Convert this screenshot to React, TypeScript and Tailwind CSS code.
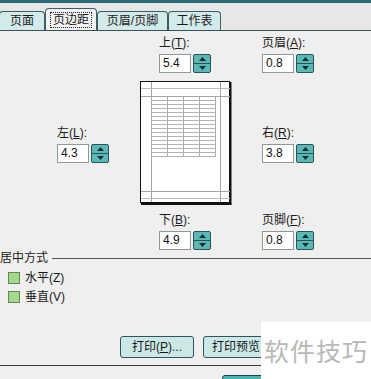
import React from "react";

const cjk = { fontFamily: '"Liberation Sans", "Noto Sans CJK SC", sans-serif' };

type FieldProps = {
  label: string;
  hot: string;
  value: string;
};

// label like 上(T): with underlined hotkey
const Label = ({ label, hot }: { label: string; hot: string }) => (
  <div className="h-[15px] text-[12px] leading-[15px] text-[#1a1a1a]">
    {label}(<span className="underline">{hot}</span>):
  </div>
);

const Spinner = () => (
  <div className="ml-[2px] flex h-[19px] w-[18px] flex-col rounded-[2px] border border-[#27545a] bg-[#5cb8b4]">
    <div className="flex flex-1 items-center justify-center border-b border-[#27545a]">
      <svg width="7" height="4" viewBox="0 0 7 4">
        <path d="M0 4 L3.5 0 L7 4 Z" fill="#12303a" />
      </svg>
    </div>
    <div className="flex flex-1 items-center justify-center">
      <svg width="7" height="4" viewBox="0 0 7 4">
        <path d="M0 0 L3.5 4 L7 0 Z" fill="#12303a" />
      </svg>
    </div>
  </div>
);

const Field = ({ label, hot, value }: FieldProps) => (
  <div className="flex flex-col gap-[3px]">
    <Label label={label} hot={hot} />
    <div className="flex items-center">
      <div className="h-[19px] w-[32px] border border-[#8c9a9c] bg-white pl-[3px] text-[12px] leading-[17px] text-[#111]">
        {value}
      </div>
      <Spinner />
    </div>
  </div>
);

const PagePreview = () => {
  const rows = [];
  for (let y = 99; y <= 155; y += 4) rows.push(y);
  return (
    <div className="h-[124px] w-[92px]">
      <svg width="92" height="124" viewBox="140 80 92 124">
        <rect x="140" y="80" width="92" height="124" fill="#f0f0f0" />
        <rect x="140.5" y="80.5" width="89" height="121" fill="#fff" stroke="#111" />
        <line x1="230.5" y1="81" x2="230.5" y2="203" stroke="#111" strokeWidth="2" />
        <line x1="141" y1="203" x2="231.5" y2="203" stroke="#111" strokeWidth="2" />
        {/* margin guides */}
        <line x1="151.5" y1="81" x2="151.5" y2="201" stroke="#a4a4a4" />
        <line x1="220.5" y1="81" x2="220.5" y2="201" stroke="#a4a4a4" />
        <line x1="141" y1="87.5" x2="230" y2="87.5" stroke="#bbb" />
        <line x1="141" y1="95.5" x2="230" y2="95.5" stroke="#a4a4a4" />
        <line x1="141" y1="190.5" x2="230" y2="190.5" stroke="#a4a4a4" />
        <line x1="141" y1="197.5" x2="230" y2="197.5" stroke="#bbb" />
        {/* table */}
        {[151.5, 167.5, 183.5, 199.5, 215.5].map((x) => (
          <line key={x} x1={x} y1="96" x2={x} y2="156" stroke="#aaa" />
        ))}
        {rows.map((y) => (
          <line key={y} x1="151" y1={y + 0.5} x2="216" y2={y + 0.5} stroke="#b4b4b4" />
        ))}
      </svg>
    </div>
  );
};

const Tab = ({ text, active, w }: { text: string; active?: boolean; w: string }) => (
  <div
    className={`flex items-center justify-center rounded-t-[4px] border border-b-0 border-[#3d5d63] text-[12px] text-[#1a1a1a] ${w} ${
      active ? "h-[22px] bg-[#f2f2f2]" : "h-[19px] bg-[#d3eaea]"
    }`}
  >
    {active ? (
      <span className="border border-dotted border-[#222] px-[2px] leading-[14px]">{text}</span>
    ) : (
      text
    )}
  </div>
);

const Check = ({ label, hot }: { label: string; hot: string }) => (
  <div className="flex h-[19px] items-center gap-[5px] pl-[8px]">
    <div className="h-[12px] w-[12px] border border-[#5c8c4e] bg-[#a4d88c]" />
    <span className="text-[12px] text-[#1a1a1a]">
      {label}(<span>{hot}</span>)
    </span>
  </div>
);

export default function App() {
  return (
    <div className="relative h-[379px] w-[371px] overflow-hidden bg-[#efefef]" style={cjk}>
      <div className="h-[3px] bg-[#2e6a74]" />
      {/* tab strip */}
      <div className="flex h-[27px] items-end bg-[#e6e8e8] pl-0 -ml-[1px]">
        <Tab text="页面" w="w-[46px]" />
        <Tab text="页边距" w="w-[52px]" active />
        <Tab text="页眉/页脚" w="w-[71px]" />
        <Tab text="工作表" w="w-[53px]" />
      </div>
      <div className="h-px bg-[#3d5258]" />

      {/* margins area */}
      <div className="mt-[5px] flex pl-[159px]">
        <div className="w-[103px]">
          <Field label="上" hot="T" value="5.4" />
        </div>
        <Field label="页眉" hot="A" value="0.8" />
      </div>

      <div className="mt-[8px] flex items-center pl-[57px]">
        <div className="w-[83px] pt-[2px]">
          <Field label="左" hot="L" value="4.3" />
        </div>
        <PagePreview />
        <div className="ml-[30px] pt-[2px]">
          <Field label="右" hot="R" value="3.8" />
        </div>
      </div>

      <div className="mt-[8px] flex pl-[159px]">
        <div className="w-[103px]">
          <Field label="下" hot="B" value="4.9" />
        </div>
        <Field label="页脚" hot="F" value="0.8" />
      </div>

      {/* centering group */}
      <div className="mt-[1px] flex items-center">
        <span className="text-[12px] leading-[15px] text-[#1a1a1a]">居中方式</span>
        <div className="ml-[4px] h-px flex-1 bg-[#555]" />
      </div>
      <div className="mt-[2px] flex flex-col">
        <Check label="水平" hot="Z" />
        <Check label="垂直" hot="V" />
      </div>

      {/* print buttons */}
      <div className="mt-[30px] flex gap-[9px] pl-[120px]">
        <div className="flex h-[22px] w-[74px] items-center justify-center rounded-[3px] border border-[#2c5560] bg-[#cbe8e6] text-[12px] text-[#1a1a1a]">
          打印(<span className="underline">P</span>)...
        </div>
        <div className="flex h-[22px] w-[80px] items-center justify-start rounded-[3px] border border-[#2c5560] bg-[#cbe8e6] pl-[8px] text-[12px] text-[#1a1a1a]">
          打印预览
        </div>
      </div>
      <div className="mt-[7px] h-px bg-[#3a3a3a]" />
      <div className="mt-[9px] flex pl-[222px]">
        <div className="flex h-[24px] w-[80px] justify-center rounded-[3px] border border-[#1d4550] bg-[#4db3ae] pt-[2px] text-[12px] text-[#111]">
          确定
        </div>
      </div>

      {/* watermark */}
      <div className="absolute left-[261px] top-[322px] flex h-[57px] w-[110px] items-center justify-center bg-white">
        <span
          className="text-[25px] tracking-[1px] text-[#b8b8b8]"
          style={{ fontFamily: '"Noto Sans CJK SC", sans-serif' }}
        >
          软件技巧
        </span>
      </div>
    </div>
  );
}
